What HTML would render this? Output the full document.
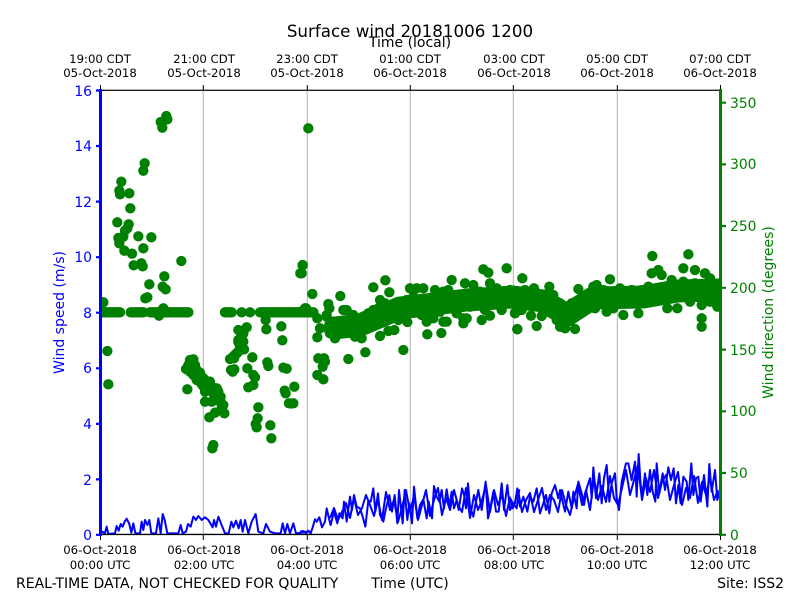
<!DOCTYPE html>
<html><head><meta charset="utf-8"><title>Surface wind 20181006 1200</title>
<style>
html,body{margin:0;padding:0;background:#fff;width:800px;height:600px;overflow:hidden}
svg{position:absolute;left:0;top:0;display:block}
text{font-family:"DejaVu Sans",sans-serif;fill:#000}
.s{font-size:11.7px;text-anchor:middle}
.m{font-size:14px}
.b{fill:#00f;font-size:13.9px;text-anchor:end}
.g{fill:#008000;font-size:13.9px}
.d{fill:none;stroke:#008000;stroke-width:31;stroke-linecap:round;stroke-linejoin:round}
.l{fill:none;stroke:#00f;stroke-width:6;stroke-linejoin:round}
</style></head><body>
<svg width="800" height="600" viewBox="0 0 800 600" xmlns="http://www.w3.org/2000/svg">
<defs><clipPath id="c"><rect x="100.5" y="90.5" width="620" height="444"/></clipPath></defs>
<g stroke="#b0b0b0" stroke-width="1" fill="none">
<path d="M203.3 90V534M307.3 90V534M410.3 90V534M513.3 90V534M617.3 90V534M100 90H720M100 534H720"/>
</g>
<g clip-path="url(#c)">
<path d="M335 328L360 325 400 308 467 300 513 297 543 301 567 315 593 298 643 297 677 291 718 290" fill="none" stroke="#008000" stroke-width="23" stroke-linejoin="round" stroke-linecap="round"/>
<g transform="translate(90,80) scale(.33333)"><path class="d" d="M229 108h0M232 118h0M212 126h0M217 143h0M164 250h0M160 272h0M94 305h0M88 332h0M90 343h0M118 340h0M121 385h0M82 427h0M116 433h0M112 445h0M105 452h0M85 474h0M100 470h0M145 469h0M184 472h0M88 490h0M103 512h0M126 521h0M160 505h0M131 556h0M154 550h0M158 559h0M274 543h0M223 589h0M178 613h0M218 620h0M227 628h0M172 652h0M166 655h0M40 667h0M638 556h0M631 580h0M655 145h0"/></g>
<g transform="translate(90,300) scale(.33333)"><path class="d" d="M30 37H90M122 37H160M180 37H295M405 37H425M455 37h0M480 37h0M510 37H670M220 25h0M207 47h0M648 25h0M52 153h0M55 253h0M300 180L330 225 380 275 398 320M300 205L345 265M300 180h0M310 178h0M295 195h0M305 200h0M315 195h0M288 207h0M300 215h0M320 210h0M330 218h0M310 225h0M320 240h0M335 245h0M360 245h0M345 258h0M355 265h0M365 262h0M380 265h0M345 275h0M370 280h0M385 275h0M392 290h0M380 300h0M400 315h0M395 325h0M345 305h0M365 305h0M292 268h0M358 352h0M375 338h0M403 340h0M445 90h0M470 82h0M460 100L445 125 455 145 425 175M445 120h0M460 125h0M450 140h0M462 148h0M440 160h0M432 175h0M420 177h0M487 172h0M472 205h0M423 210h0M433 208h0M428 215h0M490 225h0M495 232h0M490 255h0M475 262h0M532 187h0M535 198h0M527 60h0M529 88h0M574 79h0M577 121h0M580 203h0M590 206h0M613 260h0M584 272h0M587 280h0M597 310h0M610 310h0M505 322h0M503 355h0M497 372h0M500 382h0M541 376h0M544 415h0M370 435h0M367 445h0"/></g>
<g transform="translate(300,250) scale(.33333)"><path class="d" d="M8 45h0M5 70h0M37 132h0M15 175h0M5 185h0M40 188h0M52 205h0M60 235h0M52 262h0M85 162h0M88 175h0M121 138h0M220 112h0M256 91h0M268 127h0M55 325h0M72 325h0M75 335h0M68 350h0M52 375h0M70 388h0M145 327h0M196 307h0M310 300h0M240 258h0M265 243h0M283 240h0M322 216h0M382 253h0M424 249h0M490 220h0M545 210h0M570 197h0M550 58h0M565 68h0M620 55h0M455 90h0M652 237h0M645 190h0M605 180h0M80 200h0M100 215h0M120 225h0M140 215h0M160 230h0M180 245h0M200 235h0M105 265h0M90 250h0M125 250h0M165 260h0M185 265h0M150 205h0M130 180h0M160 195h0M140 180h0M80 195h0M215 225h0M205 190h0M220 180h0M240 150h0M235 175h0M255 160h0M270 200h0M295 210h0M250 205h0M235 205h0M300 155h0M320 150h0M340 140h0M330 115h0M350 115h0M370 115h0M310 170h0M345 165h0M375 195h0M365 195h0M380 215h0M400 205h0M410 150h0M405 120h0M430 125h0M445 120h0M430 160h0M450 170h0M430 215h0M440 215h0M470 190h0M490 205h0M500 205h0M460 140h0M480 150h0M510 170h0M530 160h0M550 150h0M495 100h0M520 105h0M540 125h0M570 100h0M590 115h0M570 140h0M600 165h0M610 135h0M630 120h0M650 140h0M660 150h0M555 180h0M395 175h0M420 185h0"/></g>
<g transform="translate(510,240) scale(.33333)"><path class="d" d="M427 48h0M535 43h0M37 115h0M300 118h0M22 268h0M80 258h0M575 260h0M575 235h0M472 205h0M502 205h0M622 200h0M10 155h0M20 185h0M45 150h0M72 145h0M15 218h0M35 210h0M63 227h0M95 228h0M118 140h0M100 175h0M60 180h0M130 165h0M120 200h0M85 190h0M150 190h0M140 240h0M155 215h0M150 260h0M165 265h0M195 267h0M175 235h0M205 215h0M185 190h0M205 147h0M225 180h0M250 140h0M260 135h0M280 150h0M255 205h0M240 170h0M290 215h0M265 175h0M310 205h0M330 145h0M340 225h0M325 175h0M365 150h0M385 220h0M360 185h0M395 150h0M415 140h0M390 185h0M425 100h0M445 90h0M455 105h0M430 160h0M470 150h0M485 120h0M490 165h0M520 85h0M520 125h0M555 90h0M585 100h0M600 115h0M540 150h0M510 150h0M540 185h0M575 195h0M590 165h0M620 160h0M630 130h0M570 140h0M600 185h0M620 180h0M555 130h0M530 165h0"/></g>
<g transform="translate(90,300) scale(.33333)"><path class="l" d="M30 700L38 695 44 702 50 680 55 702 75 700 80 678 86 692 92 672 98 680 104 665 110 656 118 672 124 698 130 670 136 700 150 700 155 665 160 690 165 660 172 675 178 660 184 700 198 700 205 655 212 700 218 642 224 660 232 700 265 700 272 675 278 700 288 695 294 672 302 680 310 650 318 660 325 648 335 660 345 652 355 660 368 682 372 660 378 680 385 650 392 668 405 700 416 700 424 665 430 682 438 662 446 685 452 660 458 695 465 660 475 700 485 665 497 642 505 695 520 700 528 672 540 695 555 700 572 700 578 670 585 700 592 672 600 700 610 670 618 700 635 698 650 695 660 695"/></g>
<g transform="translate(300,440) scale(.33333)"><path class="l" d="M0 275L10 273 18 280 25 272 32 280 38 262 45 238 50 245 58 232 66 262 75 245 80 205 88 240 92 255 102 215 112 250 118 220 128 235 132 185 140 245 150 170 156 210 162 165 170 200 180 205 188 230 196 260 205 182 212 185 220 145 226 215 234 160 240 225 250 245 258 205 268 165 276 215 284 165 292 250 297 150 308 250 314 150 322 240 328 190 336 250 342 140 352 235 360 195 370 178 380 235 386 185 396 235 402 138 410 170 418 185 425 150 432 205 440 148 448 200 455 155 462 205 470 180 476 210 486 145 492 165 498 205 504 130 510 200 520 230 525 200 535 150 545 210 557 125 564 235 570 210 580 155 588 215 596 215 605 130 612 210 622 135 630 210 640 190 650 205 658 148"/></g>
<g transform="translate(510,440) scale(.33333)"><path class="l" d="M-2 170L8 205 15 190 22 145 30 200 40 170 52 215 60 170 70 185 80 145 90 220 100 190 108 165 118 220 125 160 135 135 145 175 150 150 165 215 175 155 185 205 190 155 200 205 205 125 215 160 222 195 230 145 240 115 245 175 250 82 258 175 268 100 275 190 282 115 290 75 298 185 305 130 315 100 320 175 327 210 335 125 342 95 348 70 355 70 365 120 375 65 380 170 386 42 392 135 398 160 405 100 412 165 420 90 428 155 436 185 440 70 448 160 458 100 465 150 475 82 483 120 491 85 498 190 505 135 512 190 520 110 530 125 535 180 544 70 550 165 558 115 565 110 572 185 582 105 592 200 598 72 605 155 615 90 622 180 628 155"/></g>
<path fill="none" stroke="#00f" stroke-width="2" stroke-linejoin="round" d="M330 518L334 508 338 520 342 512 346 503 350 518 354 498 358 515 362 508 366 495 370 505 374 516 378 500 382 520 386 492 390 510 394 500 398 522 402 508 406 490 410 512 414 496 418 520 422 505 426 490 430 516 434 500 438 488 442 515 446 498 450 510 454 490 458 505 462 512 466 488 470 518 474 495 478 510 482 500 486 485 490 512 494 490 498 505 502 495 506 516 510 498 514 506 518 490 522 512 526 500 530 493 534 512 538 500 542 488 546 510 550 495 554 500 558 512 562 490 566 505 570 515 574 498 578 484 582 505 586 490 590 510 594 478 598 500 602 486 606 502 610 476 614 498 618 505 622 488 626 470 630 495 634 480 638 465 642 500 646 478 650 492 654 470 658 498 662 482 666 475 670 500 674 485 678 472 682 505 686 488 690 498 694 476 698 503 702 482 706 495 710 478 714 500 718 490"/>
</g>
<g fill="none">
<path stroke="#000" stroke-width="1.2" d="M100 90.3H720M100 534.5H720"/>
<path stroke="#000" stroke-width="1" d="M100.5 85V90M203.3 85V90M307.3 85V90M410.3 85V90M513.3 85V90M617.3 85V90M720.5 85V90M100.5 535V540M203.3 535V540M307.3 535V540M410.3 535V540M513.3 535V540M617.3 535V540M720.5 535V540"/>
<path stroke="#00f" stroke-width="3" d="M100.5 89V536"/>
<path stroke="#00f" stroke-width="2.2" d="M96 90.5H100M96 146H100M96 201.6H100M96 257.2H100M96 312.7H100M96 368.3H100M96 423.9H100M96 479.4H100M96 534.8H100"/>
<path stroke="#008000" stroke-width="3" d="M720.5 89V536"/>
<path stroke="#008000" stroke-width="2.2" d="M721 534.8H726M721 473H726M721 411.3H726M721 349.6H726M721 287.8H726M721 226H726M721 164.4H726M721 102.7H726"/>
</g>
<text x="410" y="37" style="font-size:16.7px" text-anchor="middle">Surface wind 20181006 1200</text>
<text x="410" y="47" class="m" text-anchor="middle">Time (local)</text>
<text x="100" y="63" class="s">19:00 CDT</text><text x="100" y="77" class="s">05-Oct-2018</text>
<text x="204" y="63" class="s">21:00 CDT</text><text x="204" y="77" class="s">05-Oct-2018</text>
<text x="307" y="63" class="s">23:00 CDT</text><text x="307" y="77" class="s">05-Oct-2018</text>
<text x="410" y="63" class="s">01:00 CDT</text><text x="410" y="77" class="s">06-Oct-2018</text>
<text x="514" y="63" class="s">03:00 CDT</text><text x="514" y="77" class="s">06-Oct-2018</text>
<text x="617" y="63" class="s">05:00 CDT</text><text x="617" y="77" class="s">06-Oct-2018</text>
<text x="720" y="63" class="s">07:00 CDT</text><text x="720" y="77" class="s">06-Oct-2018</text>
<text x="100" y="554" class="s">06-Oct-2018</text><text x="100" y="569" class="s">00:00 UTC</text>
<text x="204" y="554" class="s">06-Oct-2018</text><text x="204" y="569" class="s">02:00 UTC</text>
<text x="307" y="554" class="s">06-Oct-2018</text><text x="307" y="569" class="s">04:00 UTC</text>
<text x="410" y="554" class="s">06-Oct-2018</text><text x="410" y="569" class="s">06:00 UTC</text>
<text x="514" y="554" class="s">06-Oct-2018</text><text x="514" y="569" class="s">08:00 UTC</text>
<text x="617" y="554" class="s">06-Oct-2018</text><text x="617" y="569" class="s">10:00 UTC</text>
<text x="720" y="554" class="s">06-Oct-2018</text><text x="720" y="569" class="s">12:00 UTC</text>
<text x="16" y="588" class="m">REAL-TIME DATA, NOT CHECKED FOR QUALITY</text>
<text x="410" y="588" class="m" text-anchor="middle">Time (UTC)</text>
<text x="784" y="588" class="m" text-anchor="end">Site: ISS2</text>
<text x="92" y="96" class="b">16</text><text x="92" y="151" class="b">14</text><text x="92" y="207" class="b">12</text><text x="92" y="262" class="b">10</text>
<text x="92" y="318" class="b">8</text><text x="92" y="373" class="b">6</text><text x="92" y="429" class="b">4</text><text x="92" y="485" class="b">2</text><text x="92" y="540" class="b">0</text>
<text x="730" y="540" class="g">0</text><text x="730" y="478" class="g">50</text><text x="730" y="416" class="g">100</text><text x="730" y="355" class="g">150</text>
<text x="730" y="293" class="g">200</text><text x="730" y="231" class="g">250</text><text x="730" y="169" class="g">300</text><text x="730" y="108" class="g">350</text>
<text transform="translate(64,312.5) rotate(-90)" class="m" text-anchor="middle" style="fill:#00f">Wind speed (m/s)</text>
<text transform="translate(773,312.5) rotate(-90)" class="m" text-anchor="middle" style="fill:#008000">Wind direction (degrees)</text>
</svg>
</body></html>
